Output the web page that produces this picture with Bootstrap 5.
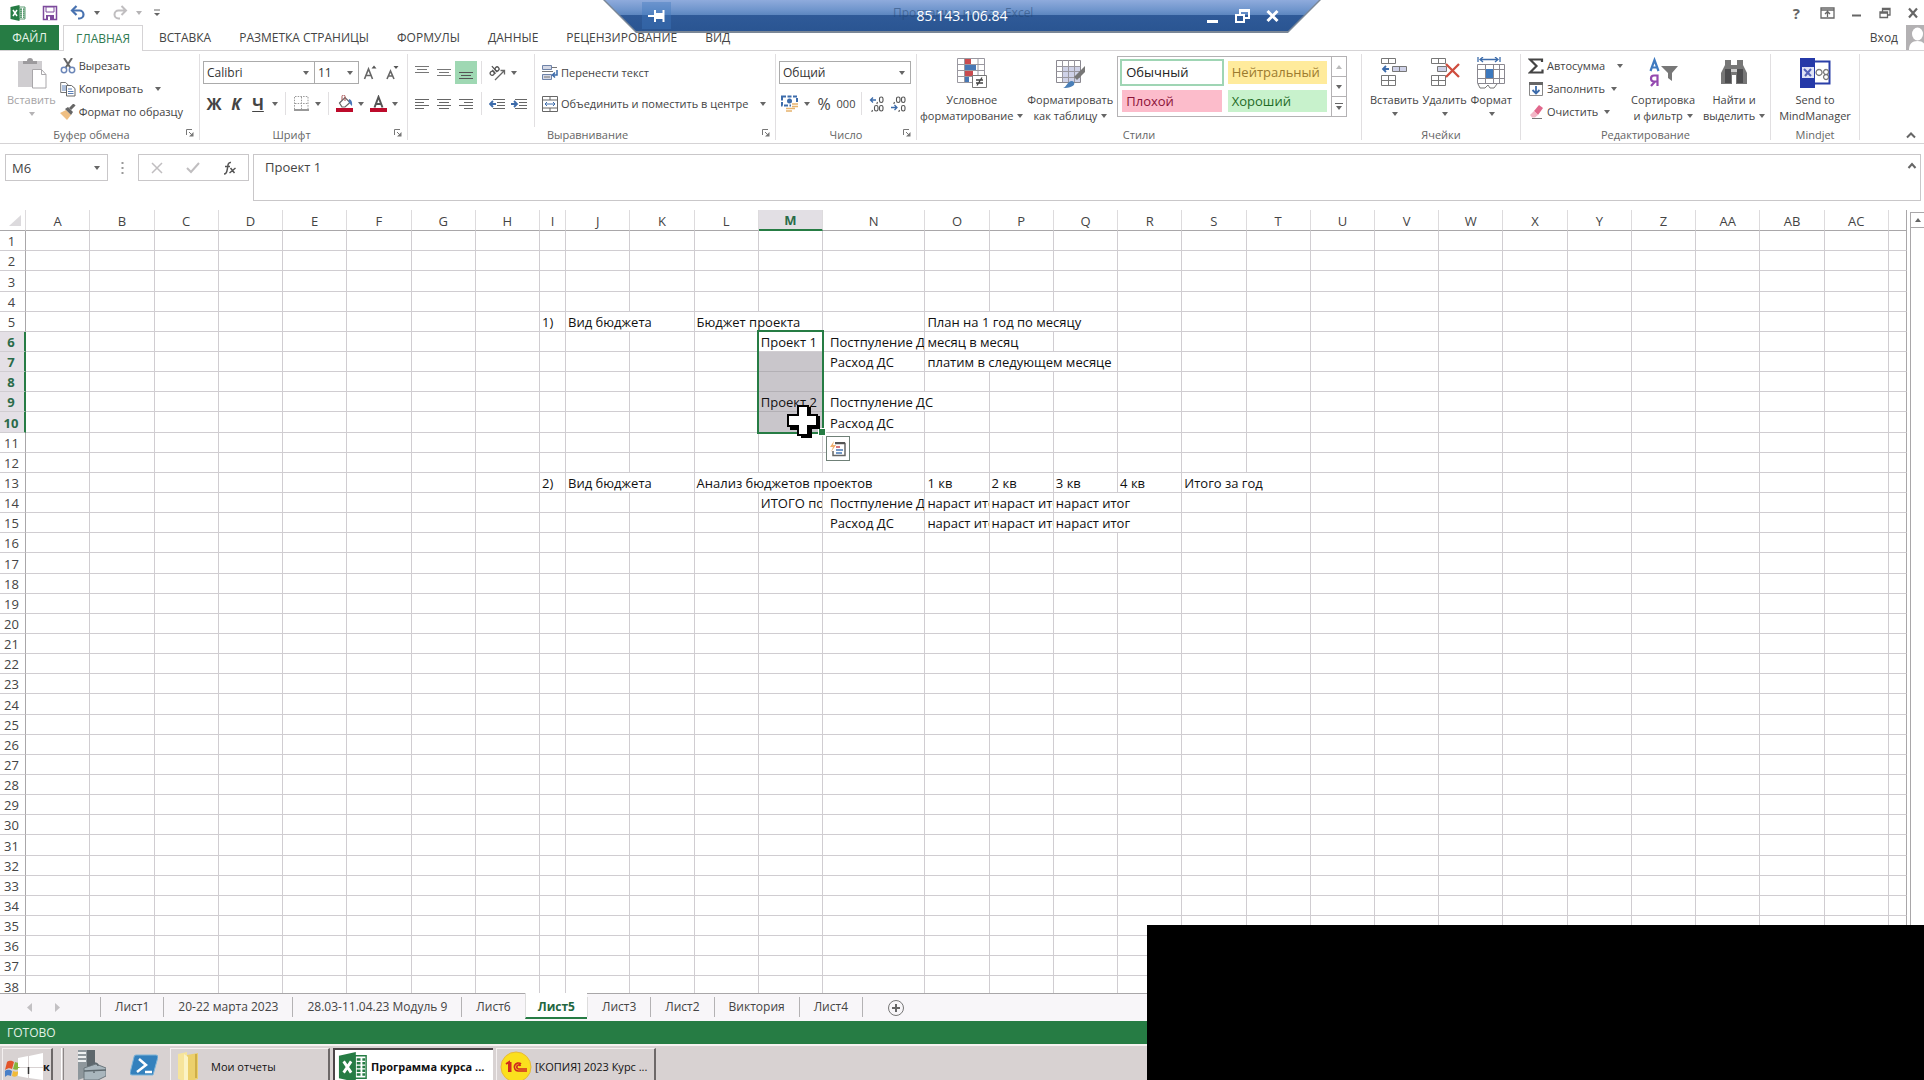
<!DOCTYPE html>
<html lang="ru">
<head>
<meta charset="utf-8">
<meta name="viewport" content="width=device-width, initial-scale=1">
<title>Программа курса - Excel</title>
<link href="https://cdn.jsdelivr.net/npm/bootstrap@5.3.0/dist/css/bootstrap.min.css" rel="stylesheet">
<style>
:root { --xl-green: #267c44; --xl-line: #d0cdd1; --xl-text: #444; }
body { font-family: "Open Sans", "Noto Sans", sans-serif; font-size: 12px; line-height: 16px; color: var(--xl-text); background: #fff; }
button { color: inherit; background: none; border: 0; padding: 0; }
svg { display: block; flex: none; }
a { color: inherit; text-decoration: none; }
.arrow { width: 0; height: 0; border: 3px solid transparent; border-top: 4px solid #666; border-bottom: 0; display: inline-block; flex: none; }
.faded { color: #a5a3a5; }
.faded .arrow { border-top-color: #b5b3b5; }

/* title row */
.title-row { height: 25px; padding: 0 5px 0 10px; }
.title-row .quick { gap: 12px; }
.title-row .wins { gap: 12px; }
.help-mark { font-size: 15px; font-weight: 700; color: #666; }

/* remote desktop bar */
.remote-edge { top: 0; width: 718px; height: 33px; background: #7b8796; clip-path: polygon(0 0, 100% 0, calc(100% - 33px) 100%, 33px 100%); z-index: 5; }
.remote-bar { height: 31px; margin: 0 2px; color: #fff; font-size: 14px; background: linear-gradient(#8fabdc 0, #6f95cc 10px, #5c86bf 15px, #2f5a98 15px, #2a5592 31px); clip-path: polygon(0 0, 100% 0, calc(100% - 31px) 100%, 31px 100%); padding: 0 40px 0 37px; }
.remote-bar .pin { width: 29px; height: 27px; background: #3f79bd66; }
.remote-ghost { left: 288px; top: 5px; font-size: 12px; color: #24457088; white-space: nowrap; }
.remote-name { width: 100px; }

/* ribbon tabs */
.tab-row { height: 26px; border-bottom: 1px solid #d5d3d5; }
.tab-row a { padding: 0 14px; height: 25px; display: flex; align-items: center; }
.tab-row a.file-tab { background: var(--xl-green); color: #e8f5ea; width: 59px; padding: 0; justify-content: center; margin-right: 4px; }
.tab-row a.now { border: 1px solid #d5d3d5; border-bottom: 0; height: 26px; color: #2f7a50; background: #fff; padding: 0; width: 80px; justify-content: center; margin-right: 2px; }

/* ribbon */
.ribbon { height: 93px; border-bottom: 1px solid #d5d3d5; font-size: 11px; }
.group { border-right: 1px solid #e1dfe1; margin: 3px 0; position: relative; flex: none; }
.group-body { height: 73px; padding: 0 3px; }
.group-name { height: 16px; text-align: center; color: #666; }
.group-name .launch { position: absolute; right: 5px; bottom: 3px; }
.w-clip { width: 200px; } .w-font { width: 208px; } .w-align { width: 368px; } .w-num { width: 141px; }
.w-style { width: 445px; } .w-cells { width: 159px; } .w-edit { width: 250px; } .w-mind { width: 89px; }
.small-btn { height: 23px; display: flex; align-items: center; gap: 3px; white-space: nowrap; }
.small-btn .arrow { margin-left: 3px; }
.small-btn .arrow.far { margin-left: 9px; }
.two-rows { padding-top: 7px; display: flex; flex-direction: column; gap: 8px; }
.two-rows > div { height: 23px; }
.tool { width: 22px; height: 23px; display: flex; align-items: center; justify-content: center; }
.tool.drop { width: 12px; }
.tool.on { background: #9fd8b3; }
.bar { width: 1px; background: #e1dfe1; margin: 0 4px; }
.big-btn { display: flex; flex-direction: column; align-items: center; padding-top: 3px; text-align: center; white-space: nowrap; }
.big-btn svg { margin-bottom: 3px; }
.big-btn .arrow { margin-left: 1px; vertical-align: 2px; }
.pick { appearance: none; border: 1px solid #ababab; border-radius: 0; color: #333; padding: 0 14px 0 3px; height: 23px; font-size: 12px; background: #fff url("data:image/svg+xml,%3Csvg xmlns='http://www.w3.org/2000/svg' width='6' height='4'%3E%3Cpath d='M0 0h6L3 4z' fill='%23666'/%3E%3C/svg%3E") no-repeat right 5px center; }
.pick-face { width: 112px; } .pick-size { width: 45px; margin-left: -1px; } .pick-num { width: 132px; }
.gallery { width: 230px; height: 61px; border: 1px solid #b4b2b4; margin-top: 2px; font-size: 13px; flex: none; }
.gallery-cells { flex: 1; display: grid; grid-template-columns: 1fr 1fr; gap: 6px; padding: 4px; }
.gallery-cells button { text-align: left; padding-left: 4px; }
.st-plain { color: #222; outline: 2px solid #9fd5b4; }
.st-neutral { background: #ffeb9c; color: #9c7a2e; }
.st-bad { background: #fcbccb; color: #8c1238; }
.st-good { background: #c8f2cc; color: #1f6b26; }
.gallery-nav { width: 15px; border-left: 1px solid #b4b2b4; }
.gallery-nav button { flex: 1; display: flex; align-items: center; justify-content: center; }
.gallery-nav button + button { border-top: 1px solid #b4b2b4; }

/* formula bar */
.formula-row { height: 66px; padding: 10px 3px 0 5px; font-size: 13px; }
.name-box { width: 103px; height: 27px; padding-left: 6px; border-color: #c9c7c9; font-size: 13px; color: var(--xl-text); background-position: right 7px center; }
.fx-box { width: 111px; height: 27px; border: 1px solid #c9c7c9; }
.formula-input { height: 47px; border: 1px solid #c9c7c9; resize: none; padding: 3px 11px; color: var(--xl-text); flex: 1; line-height: 18px; }

/* sheet */
.sheet-area { flex: 1; min-height: 0; overflow: hidden; }
.sheet-wrap { flex: 1; min-width: 0; }
.sheet { table-layout: fixed; width: 100%; border-collapse: separate; border-spacing: 0; color: #111; font-size: 13px; line-height: 18px; }
.sheet td, .sheet th { height: 20px; padding: 1px 0 0 2px; border-right: 1px solid var(--xl-line); border-bottom: 1px solid var(--xl-line); white-space: nowrap; overflow: hidden; font-weight: 400; }
.sheet tbody tr:nth-child(7n+3) > * { height: 21px; }
.sheet th { text-align: center; padding: 1px 0 0; color: var(--xl-text); }
.sheet tbody th { padding-right: 2px; border-right-color: #a9a7a9; }
.sheet thead th { border-bottom-color: #a9a7a9; height: 21px; line-height: 16px; border-right-color: #dddbdd; }
.sheet tbody th.picked { background: #e4e0e6; color: #2a6b49; font-weight: 700; border-right: 2px solid var(--xl-green); }
.sheet thead th.picked { background: #e2dfe4; color: #2a6b49; font-weight: 700; border-bottom: 2px solid var(--xl-green); }
.sheet td.shade { background: #c9c6cb; border-bottom-color: #b3b0b5; }
.sheet td.in { padding-left: 7px; }
.sheet td.anchor { position: relative; overflow: visible; z-index: 2; }
.sheet tr > :last-child { border-right-color: #a9a7a9; }
.marquee { position: absolute; left: -2px; top: -2px; width: calc(100% + 4px); height: 104px; border: 2px solid var(--xl-green); }
.marquee .handle { position: absolute; right: -3px; bottom: -3px; width: 6px; height: 6px; background: var(--xl-green); outline: 1px solid #fff; }
.quick-tool { position: absolute; left: 67px; top: 104px; width: 24px; height: 25px; border: 1px solid #6f8077; background: #fff; display: flex; align-items: center; justify-content: center; }
.cross { position: absolute; left: 27px; top: 72px; }
.scroller { width: 17px; flex: none; padding: 2px 0 0 3px; }
.scroller > div { border: 1px solid #a9a7a9; border-right: 0; flex: 1; }
.scroller button { height: 15px; width: 100%; border-bottom: 1px solid #a9a7a9; display: flex; align-items: center; justify-content: center; }

/* sheet tabs, status, taskbar */
.sheet-tabs { height: 28px; border-top: 1px solid #a9a7a9; background: #f8f6f9; padding-left: 100px; position: relative; }
.sheet-tabs .turn { position: absolute; left: 27px; top: 9px; gap: 21px; }
.sheet-tabs a { height: 20px; margin-top: 3px; line-height: 20px; padding: 0 14px; border-left: 1px solid #b4b2b4; }
.sheet-tabs a.now { margin-top: -1px; height: 26px; line-height: 27px; background: #fff; color: #23663f; font-weight: 700; border-left-color: #ddd; border-bottom: 2px solid var(--xl-green); padding: 0 12px; }
.sheet-tabs a.now + a { border-left-color: #ddd; }
.status { height: 23px; background: var(--xl-green); color: #e3f1e6; padding-left: 7px; line-height: 23px; }
.tasks { height: 36px; border-top: 2px solid #f6f2f0; background: #d8d2d2; padding: 2px 0 0 2px; font-size: 11px; color: #111; overflow: hidden; }
.task { width: 160px; height: 38px; margin-right: 3px; display: flex; align-items: center; gap: 3px; border: 1px solid #f4f0f0; border-right: 2px solid #6d6868; padding: 0 3px; white-space: nowrap; }
.task.live { background: #fff; border: 2px solid #4c4549; border-right: 0; font-weight: 700; }
.task.begin { width: 51px; padding: 0 2px; gap: 0; font-weight: 700; margin-right: 8px; }
.task-split { width: 3px; height: 36px; border-left: 1px solid #fff; border-right: 1px solid #8b8686; }
.privacy { right: 0; bottom: 0; width: 777px; height: 155px; background: #000; z-index: 6; }
</style>
<script src="https://cdn.jsdelivr.net/npm/bootstrap@5.3.0/dist/js/bootstrap.bundle.min.js"></script>
</head>
<body class="d-flex flex-column vh-100 overflow-hidden position-relative">

<svg width="0" height="0" class="position-absolute">
  <defs>
    <symbol id="launch" viewBox="0 0 8 8"><path d="M.5 6V.5H6M3 3l3 3" fill="none" stroke="#777"/><path d="M7.500 3v4.500H3z" fill="#777"/></symbol>
    <symbol id="excel" viewBox="0 0 32 32"><path d="M18 4h12v24H18z" fill="#fff" stroke="#267c44" stroke-width="1.500"/><path d="M20 8h4M26 8h3M20 12h4M26 12h3M20 16h4M26 16h3M20 20h4M26 20h3M20 24h4M26 24h3" stroke="#267c44" stroke-width="2.500"/><path d="M1 4l18-4v32L1 28z" fill="#267c44"/><path d="M6 10l8 12M14 10L6 22" stroke="#fff" stroke-width="3"/></symbol>
  </defs>
</svg>

<header>
  <div class="title-row d-flex justify-content-between align-items-center">
    <div class="quick d-flex align-items-center">
      <svg width="16" height="16"><use href="#excel"/></svg>
      <button aria-label="Сохранить" class="ms-1"><svg width="16" height="16" viewBox="0 0 16 16"><path d="M1.500 1.500h13v13h-13z" fill="#fff" stroke="#7d4a9c" stroke-width="1.500"/><path d="M4 2h8v5H4z" fill="#fff" stroke="#7d4a9c"/><path d="M4 10h8v5H4z" fill="#7d4a9c"/><path d="M6 11.500h2V15H6z" fill="#fff"/></svg></button>
      <button aria-label="Отменить" class="d-flex align-items-center gap-2"><svg width="16" height="16" viewBox="0 0 16 16"><path d="M3 5.500h6.500a3.800 3.800 0 0 1 0 8H8" fill="none" stroke="#4872b0" stroke-width="2.200"/><path d="M6.500 1L2 5.500 6.500 10" fill="none" stroke="#4872b0" stroke-width="2.200"/></svg><span class="arrow"></span></button>
      <button aria-label="Вернуть" class="d-flex align-items-center gap-2 faded"><svg width="16" height="16" viewBox="0 0 16 16"><path d="M13 5.500H6.500a3.800 3.800 0 0 0 0 8H8M9.500 1L14 5.500 9.500 10" fill="none" stroke="#c0bec0" stroke-width="2"/></svg><span class="arrow"></span></button>
      <button aria-label="Настройка панели"><svg width="6" height="8" viewBox="0 0 6 8"><path d="M0 1h6" stroke="#666"/><path d="M0 4h6L3 7z" fill="#666"/></svg></button>
    </div>
    <div class="wins d-flex align-items-center">
      <button aria-label="Справка" class="help-mark px-2">?</button>
      <button aria-label="Лента"><svg width="15" height="12" viewBox="0 0 15 12"><path d="M1 1h13v10H1zM1 3h13M7.500 10V5M5 7l2.500-2.500L10 7" fill="none" stroke="#666" stroke-width="1.300"/></svg></button>
      <button aria-label="Свернуть" class="ms-1"><svg width="12" height="12"><path d="M1 8.500h9" stroke="#666" stroke-width="2"/></svg></button>
      <button aria-label="Окно" class="ms-1"><svg width="12" height="12" viewBox="0 0 12 12"><path d="M1 5h7.500v5.500H1zM1 6h7M3.500 4.500V1.500h7.500V8H9M3.500 2.500H11" fill="none" stroke="#666" stroke-width="1.300"/></svg></button>
      <button aria-label="Закрыть" class="ms-1"><svg width="12" height="12"><path d="M2 1.500l8 9M10 1.500l-8 9" stroke="#666" stroke-width="2.200"/></svg></button>
    </div>
  </div>

  <nav class="tab-row d-flex">
    <a href="#" class="file-tab">ФАЙЛ</a>
    <a href="#" class="now">ГЛАВНАЯ</a>
    <a href="#">ВСТАВКА</a>
    <a href="#">РАЗМЕТКА СТРАНИЦЫ</a>
    <a href="#">ФОРМУЛЫ</a>
    <a href="#">ДАННЫЕ</a>
    <a href="#">РЕЦЕНЗИРОВАНИЕ</a>
    <a href="#">ВИД</a>
    <a href="#" class="ms-auto p-0 pe-2">Вход</a>
    <svg width="18" height="25" viewBox="0 0 18 25"><path d="M0 0h18v25H0z" fill="#b3b1b3"/><ellipse cx="11.500" cy="9" rx="5.500" ry="6.500" fill="#fff"/><path d="M3 25c0-6 3-9 8.500-9S20 19 20 25z" fill="#fff"/></svg>
  </nav>
</header>

<section class="ribbon d-flex position-relative">
  <div class="group w-clip">
    <div class="group-body d-flex">
      <button class="big-btn faded px-1"><svg width="32" height="32" viewBox="0 0 32 32"><path d="M3 4h24v26H3z" fill="#cfcdd0"/><path d="M8 7V4h4a3 3 0 0 1 6 0h4v3z" fill="#9c9a9d"/><path d="M17.500 12.500h9l4.500 5v13.500H17.500z" fill="#fff" stroke="#a9a7aa"/><path d="M26.500 12.500v5H31" fill="none" stroke="#a9a7aa"/></svg>Вставить<span class="arrow mt-1"></span></button>
      <div>
        <button class="small-btn"><svg width="16" height="16" viewBox="0 0 16 16"><path d="M4 0l6.500 10M12 0L5.500 10" stroke="#666" stroke-width="2"/><circle cx="4" cy="12" r="2.700" fill="none" stroke="#6d87b8" stroke-width="1.500"/><circle cx="12" cy="12" r="2.700" fill="none" stroke="#6d87b8" stroke-width="1.500"/></svg>Вырезать</button>
        <button class="small-btn"><svg width="16" height="16" viewBox="0 0 16 16"><path d="M.7 1.500h5l3 3v7h-8z" fill="#fff" stroke="#777"/><path d="M2 5h4M2 7h4M2 9h4" stroke="#5b7fb5"/><path d="M6.500 4.500h5l3.500 3v7.500H6.500z" fill="#fff" stroke="#666"/><path d="M8 8h4M8 10.500h5.500M8 12.500h5.500" stroke="#5b7fb5"/></svg>Копировать<span class="arrow far"></span></button>
        <button class="small-btn"><svg width="16" height="16" viewBox="0 0 16 16"><path d="M0 9l6-3 5 5-4 5z" fill="#efbf83"/><path d="M5 5l3-2 5 5-2 3z" fill="#666"/><path d="M10 5l4.500-4.500" stroke="#666" stroke-width="3"/></svg>Формат по образцу</button>
      </div>
    </div>
    <div class="group-name pe-3">Буфер обмена<svg class="launch" width="8" height="8"><use href="#launch"/></svg></div>
  </div>

  <div class="group w-font">
    <div class="group-body two-rows">
      <div class="d-flex align-items-center">
        <select class="pick pick-face" aria-label="Шрифт"><option>Calibri</option></select>
        <select class="pick pick-size" aria-label="Размер"><option>11</option></select>
        <button class="tool" aria-label="Крупнее"><svg width="14" height="16" viewBox="0 0 14 16"><path d="M1.500 14L5.500 4l4 10M3 10.500h5" fill="none" stroke="#666" stroke-width="1.600"/><path d="M8.500 3.500h5L11 .5z" fill="#555"/></svg></button>
        <button class="tool" aria-label="Мельче"><svg width="14" height="16" viewBox="0 0 14 16"><path d="M2 14l3.500-8L9 14M3.500 11h4" fill="none" stroke="#666" stroke-width="1.600"/><path d="M8.500 1h5L11 4z" fill="#555"/></svg></button>
      </div>
      <div class="d-flex">
        <button class="tool fw-bold fs-6">Ж</button><button class="tool fw-bold fst-italic fs-6">К</button><button class="tool fw-bold fs-6 text-decoration-underline">Ч</button><button class="tool drop" aria-label="Подчеркивание"><span class="arrow"></span></button>
        <span class="bar"></span>
        <button class="tool" aria-label="Границы"><svg width="15" height="15" viewBox="0 0 15 15"><path d="M1 .5h13M1 7.500h13M.5 1v12M7.500 1v12M14 1v12" fill="none" stroke="#999" stroke-dasharray="1.500 1.200"/><path d="M0 14h15" stroke="#777" stroke-width="1.500"/></svg></button><button class="tool drop" aria-label="Вид границ"><span class="arrow"></span></button>
        <span class="bar"></span>
        <button class="tool" aria-label="Заливка"><svg width="17" height="17" viewBox="0 0 17 17"><path d="M3.500 8L9 2.500l5 5-5 4.500H6z" fill="#fff" stroke="#666" stroke-width="1.200"/><path d="M6 5V1.500A1.500 1.500 0 0 1 9 1.500V6" fill="none" stroke="#a55" stroke-width="1"/><path d="M13 4c3 1 3.500 4 3 7-2-1-1.500-3-3.500-4z" fill="#4a76b8"/><path d="M0 13h17v4H0z" fill="#bd0b2b"/></svg></button><button class="tool drop" aria-label="Цвет заливки"><span class="arrow"></span></button>
        <button class="tool" aria-label="Цвет текста"><svg width="17" height="17" viewBox="0 0 17 17"><path d="M4.500 12.500l4-10.500 4 10.500M6 9h5" fill="none" stroke="#555" stroke-width="2"/><path d="M0 13h17v4H0z" fill="#bd0b2b"/></svg></button><button class="tool drop" aria-label="Выбор цвета"><span class="arrow"></span></button>
      </div>
    </div>
    <div class="group-name pe-4">Шрифт<svg class="launch" width="8" height="8"><use href="#launch"/></svg></div>
  </div>

  <div class="group w-align">
    <div class="d-flex">
      <div class="group-body two-rows pe-0">
        <div class="d-flex">
          <button class="tool" aria-label="По верху"><svg width="14" height="15"><path d="M0 1.500h14M2 4.500h10M0 7.500h14" stroke="#777"/></svg></button><button class="tool" aria-label="По середине"><svg width="14" height="15"><path d="M0 4.500h14M2 7.500h10M0 10.500h14" stroke="#777"/></svg></button><button class="tool on" aria-label="По низу"><svg width="14" height="15"><path d="M0 7.500h14M2 10.500h10M0 13.500h14" stroke="#555"/></svg></button>
          <span class="bar"></span>
          <button class="tool" aria-label="Ориентация"><svg width="17" height="16" viewBox="0 0 17 16"><g fill="none" stroke="#555" stroke-width="1.300" transform="rotate(-42 5 8)"><circle cx="3.500" cy="7" r="2"/><path d="M5.800 4.500v5M8 1.500v8"/><circle cx="10" cy="7" r="2"/></g><path d="M6 15L15 6M11.500 5.500H15.500V9.500" fill="none" stroke="#666" stroke-width="1.300"/></svg></button><button class="tool drop" aria-label="Поворот"><span class="arrow"></span></button>
        </div>
        <div class="d-flex">
          <button class="tool" aria-label="По левому краю"><svg width="14" height="12"><path d="M0 1.500h14M0 4.500h9M0 7.500h14M0 10.500h9" stroke="#666"/></svg></button><button class="tool" aria-label="По центру"><svg width="14" height="12"><path d="M0 1.500h14M2 4.500h10M0 7.500h14M2 10.500h10" stroke="#666"/></svg></button><button class="tool" aria-label="По правому краю"><svg width="14" height="12"><path d="M0 1.500h14M5 4.500h9M0 7.500h14M5 10.500h9" stroke="#666"/></svg></button>
          <span class="bar"></span>
          <button class="tool" aria-label="Уменьшить отступ"><svg width="16" height="12"><path d="M4 1.500h12M8 4.500h8M8 7.500h8M4 10.500h12" stroke="#666"/><path d="M7 6H1.500M4 3L1 6l3 3" fill="none" stroke="#3d6cab" stroke-width="1.800"/></svg></button><button class="tool" aria-label="Увеличить отступ"><svg width="16" height="12"><path d="M4 1.500h12M8 4.500h8M8 7.500h8M4 10.500h12" stroke="#666"/><path d="M0 6h5.500M3 3l3 3-3 3" fill="none" stroke="#3d6cab" stroke-width="1.800"/></svg></button>
        </div>
      </div>
      <span class="bar"></span>
      <div class="group-body two-rows">
        <div><button class="small-btn"><svg width="16" height="16" viewBox="0 0 16 16"><path d="M.5.500h9v4h-9zM.5 9.500h9v5h-9z" fill="#d5d9e6" stroke="#6f83a8"/><path d="M0 6.500h11M10 2.500h5M2 12h6" stroke="#777"/><path d="M15 5v5H11M13 7.500L10.500 10l2.500 2.500" fill="none" stroke="#3d6cab" stroke-width="1.500"/></svg>Перенести текст</button></div>
        <div><button class="small-btn"><svg width="16" height="16" viewBox="0 0 16 16"><path d="M.5.500h15v15H.5zM.5 4h15M.5 12h15M8 .5V4M8 12v3.500" fill="none" stroke="#666"/><path d="M3 8h10M5 6L3 8l2 2M11 6l2 2-2 2" fill="none" stroke="#3d6cab"/></svg>Объединить и поместить в центре<span class="arrow far"></span></button></div>
      </div>
    </div>
    <div class="group-name pe-2">Выравнивание<svg class="launch" width="8" height="8"><use href="#launch"/></svg></div>
  </div>

  <div class="group w-num">
    <div class="group-body two-rows">
      <div><select class="pick pick-num" aria-label="Формат числа"><option>Общий</option></select></div>
      <div class="d-flex">
        <button class="tool" aria-label="Денежный формат"><svg width="18" height="17" viewBox="0 0 18 17"><path d="M1 1.500h15v9H1z" fill="#fff" stroke="#3d6cab" stroke-width="2" stroke-dasharray="4 1.500"/><circle cx="8.500" cy="6" r="2.500" fill="#3d6cab"/><path d="M10 8h8v9H4v-5h6z" fill="#fff"/><path d="M11 9h6M11 11.500h6M5 13.500h9M5 16h6" stroke="#e6b36e" stroke-width="1.600"/></svg></button><button class="tool drop" aria-label="Валюта"><span class="arrow"></span></button>
        <button class="tool fs-6">%</button><button class="tool">000</button>
        <span class="bar"></span>
        <button class="tool" aria-label="Увеличить разрядность"><svg width="16" height="16" viewBox="0 0 16 16"><g fill="none" stroke="#555" stroke-width="1.100"><rect x="10.500" y="1" width="3.500" height="5.500" rx="1.700"/><rect x="5.500" y="9.500" width="3.500" height="5.500" rx="1.700"/><rect x="10.500" y="9.500" width="3.500" height="5.500" rx="1.700"/><path d="M8.500 6l-.7 2M3.500 14l-.7 2"/></g><path d="M7 4H1.500M4 1.500L1.500 4 4 6.500" fill="none" stroke="#3d6cab" stroke-width="1.300"/></svg></button>
        <button class="tool" aria-label="Уменьшить разрядность"><svg width="16" height="16" viewBox="0 0 16 16"><g fill="none" stroke="#555" stroke-width="1.100"><rect x="5.500" y="1" width="3.500" height="5.500" rx="1.700"/><rect x="10.500" y="1" width="3.500" height="5.500" rx="1.700"/><rect x="10.500" y="9.500" width="3.500" height="5.500" rx="1.700"/><path d="M3.500 6l-.7 2M8.500 14l-.7 2"/></g><path d="M0 11.500h6M3.500 9L6 11.500 3.500 14" fill="none" stroke="#3d6cab" stroke-width="1.300"/></svg></button>
      </div>
    </div>
    <div class="group-name">Число<svg class="launch" width="8" height="8"><use href="#launch"/></svg></div>
  </div>

  <div class="group w-style">
    <div class="group-body d-flex">
      <button class="big-btn"><svg width="32" height="32" viewBox="0 0 32 32"><path d="M1.500 1.500h27v24h-27zM1.500 7.500h27M1.500 13.500h27M1.500 19.500h27M8.500 1v25M22 1v25" fill="#fff" stroke="#9a98a0"/><path d="M9 2h6v5H9zM9 14h8v5H9z" fill="#c94b4f"/><path d="M9 8h11v5H9zM9 20h4v5H9z" fill="#4778b5"/><path d="M16.500 18.500h14v12h-14z" fill="#fff" stroke="#777"/><path d="M20 23h7M20 26h7M26 20.500l-5 8" stroke="#444" stroke-width="1.300"/></svg><span>Условное<br>форматирование <span class="arrow"></span></span></button>
      <button class="big-btn px-1"><svg width="32" height="32" viewBox="0 0 32 32"><path d="M2.500 3.500h24v22h-24z" fill="#fff" stroke="#8a8890"/><path d="M9 9h17v16H9z" fill="#cfd2e8"/><path d="M2.500 9.500h24M2.500 14.500h24M2.500 20.500h24M8.500 3v22M14.500 3v22M20.500 3v22" stroke="#9a98a0"/><path d="M31 9v6l-8 8-3-3z" fill="#777"/><path d="M9 31c4-1 4-7 9-7 4 1 4 7-9 7z" fill="#4a7fb8"/></svg><span>Форматировать<br>как таблицу <span class="arrow"></span></span></button>
      <div class="gallery d-flex">
        <div class="gallery-cells">
          <button class="st-plain">Обычный</button><button class="st-neutral">Нейтральный</button>
          <button class="st-bad">Плохой</button><button class="st-good">Хороший</button>
        </div>
        <div class="gallery-nav d-flex flex-column">
          <button aria-label="Вверх"><svg width="6" height="4"><path d="M0 4h6L3 0z" fill="#bbb"/></svg></button>
          <button aria-label="Вниз"><span class="arrow"></span></button>
          <button aria-label="Все стили"><svg width="8" height="7"><path d="M0 .5h8" stroke="#666"/><path d="M1 3h6L4 7z" fill="#666"/></svg></button>
        </div>
      </div>
    </div>
    <div class="group-name">Стили</div>
  </div>

  <div class="group w-cells">
    <div class="group-body d-flex justify-content-between px-2">
      <button class="big-btn"><svg width="32" height="32" viewBox="0 0 32 32"><path d="M3.500 1.500h14v5h-14zM10.500 1.500v5M3.500 18.500h14v10h-14zM3.500 23.500h14M10.500 18.500v10" fill="#fff" stroke="#777"/><path d="M14.500 9.500h14v5h-14zM21.500 9.500v5" fill="#cfd2e8" stroke="#777"/><path d="M11 12H5M8 9l-3 3 3 3" fill="none" stroke="#3d6cab" stroke-width="1.800"/></svg>Вставить<span class="arrow mt-1"></span></button>
      <button class="big-btn"><svg width="32" height="32" viewBox="0 0 32 32"><path d="M2.500 1.500h14v5h-14zM9.500 1.500v5M2.500 18.500h14v10h-14zM2.500 23.500h14M9.500 18.500v10" fill="#fff" stroke="#777"/><path d="M8.500 9.500h9v5h-9z" fill="#cfd2e8" stroke="#777"/><path d="M17 7l13 13M30 7L17 20" stroke="#cf4d3e" stroke-width="2.300"/></svg>Удалить<span class="arrow mt-1"></span></button>
      <button class="big-btn"><svg width="32" height="32" viewBox="0 0 32 32"><path d="M3 0v5M25 0v5M5 2.500h18M8 0L5 2.500 8 5M20 0l3 2.500L20 5" fill="none" stroke="#3d6cab" stroke-width="1.300"/><path d="M2.500 7.500h27v19h-27zM2.500 12.500h27M2.500 21.500h27M10.500 7v20M18.500 7v20M24.500 7v20" fill="#fff" stroke="#8a8890"/><path d="M11 12h7v9h-7z" fill="#3c78bd"/><path d="M3 27l2 4h5l3-3 2 3h4l3-4" fill="none" stroke="#777"/></svg>Формат<span class="arrow mt-1"></span></button>
    </div>
    <div class="group-name">Ячейки</div>
  </div>

  <div class="group w-edit">
    <div class="group-body d-flex">
      <div class="ps-1 me-2">
        <button class="small-btn"><svg width="16" height="16" viewBox="0 0 16 16"><path d="M14 4V1.500H2L8.500 8 2 14.500h12.500V11.500" fill="none" stroke="#444" stroke-width="2.200"/></svg>Автосумма<span class="arrow far"></span></button>
        <button class="small-btn"><svg width="16" height="16" viewBox="0 0 16 16"><path d="M1.500 1.500h13v13h-13z" fill="#fff" stroke="#888"/><path d="M1 1h14v3H1z" fill="#666"/><path d="M8 5v7.500M4.500 9L8 12.500 11.500 9" fill="none" stroke="#3d6cab" stroke-width="1.800"/></svg>Заполнить<span class="arrow"></span></button>
        <button class="small-btn"><svg width="16" height="16" viewBox="0 0 16 16"><path d="M6 7l5-6 4 3-5 7z" fill="#e1688c"/><path d="M6 7l4 4-3 2.500H4L2 11z" fill="#f2b6c6"/><path d="M4 14.500h10" stroke="#777"/></svg>Очистить<span class="arrow"></span></button>
      </div>
      <button class="big-btn"><svg width="32" height="32" viewBox="0 0 32 32"><path d="M3.500 14l4-11 4 11M5 10.500h5.500" fill="none" stroke="#3f7ac0" stroke-width="2.200"/><path d="M10.500 29V18.500H7a3 3 0 0 0 0 6h3.500M8 24.500L4 29" fill="none" stroke="#9449b0" stroke-width="2.200"/><path d="M14 9h17l-6 7v8l-4-3v-5z" fill="#777"/></svg><span>Сортировка<br>и фильтр <span class="arrow"></span></span></button>
      <button class="big-btn ms-2"><svg width="32" height="32" viewBox="0 0 32 32"><path d="M7 3h6v5h6V3h6v5l4 8v11H18v-9h-4v9H3V16l4-8z" fill="#777"/><path d="M7 12h6v14H7zM19 12h6v14h-6z" fill="#4d4d4f"/><path d="M13 12h6v3h-6z" fill="#ccc"/></svg><span>Найти и<br>выделить <span class="arrow"></span></span></button>
    </div>
    <div class="group-name">Редактирование</div>
  </div>

  <div class="group w-mind">
    <div class="group-body d-flex justify-content-center">
      <button class="big-btn"><svg width="32" height="32" viewBox="0 0 32 32"><path d="M15 4.500h15.500v22H15z" fill="#fff" stroke="#2a3fa8" stroke-width="2"/><path d="M1 1h15v30H1z" fill="#2539a8"/><path d="M3 10h12v11H3z" fill="#dfe3f5"/><path d="M5 12l7 7M12 12l-6 7" stroke="#5462b8" stroke-width="2"/><path d="M20 12.500a3 3 0 1 0 .1 0M27 12.500a2.500 2.500 0 1 0 .1 0M27 17.500a2.500 2.500 0 1 0 .1 0" fill="none" stroke="#777" stroke-width="1.300"/></svg><span>Send to<br>MindManager</span></button>
    </div>
    <div class="group-name">Mindjet</div>
  </div>
  <button class="ms-auto align-self-end pe-2 pb-1" aria-label="Свернуть ленту"><svg width="10" height="8"><path d="M1 6.500l4-4 4 4" fill="none" stroke="#666" stroke-width="2"/></svg></button>
</section>

<section class="formula-row d-flex align-items-start">
  <select class="pick name-box" aria-label="Имя ячейки"><option>M6</option></select>
  <svg width="30" height="27"><path d="M14.500 8v2M14.500 13v2M14.500 18v2" stroke="#999" stroke-width="2"/></svg>
  <div class="fx-box d-flex justify-content-around align-items-center me-1">
    <button aria-label="Отмена"><svg width="12" height="12"><path d="M1 1l10 10M11 1L1 11" stroke="#c0bec0" stroke-width="1.500"/></svg></button>
    <button aria-label="Ввод"><svg width="14" height="12"><path d="M1 6l4 4 8-9" fill="none" stroke="#c0bec0" stroke-width="2"/></svg></button>
    <button aria-label="Функция"><svg width="14" height="14" viewBox="0 0 14 14"><path d="M1 13c3 0 3-3 3.500-6S5 1 8 1.500M2 5.500h5M7.500 7l4 5M12.500 7l-6 5" fill="none" stroke="#555" stroke-width="1.500"/></svg></button>
  </div>
  <div class="d-flex flex-grow-1 position-relative">
    <textarea class="formula-input" aria-label="Строка формул">Проект 1</textarea>
    <svg class="position-absolute end-0 mt-2 me-1" width="10" height="8"><path d="M1.500 6l3.500-4 3.500 4" fill="none" stroke="#666" stroke-width="2"/></svg>
  </div>
</section>

<main class="sheet-area d-flex">
  <div class="sheet-wrap"><table class="sheet" id="sheet"></table></div>
  <div class="scroller d-flex"><div><button aria-label="Прокрутить вверх"><svg width="6" height="4"><path d="M0 4h6L3 0z" fill="#666"/></svg></button></div></div>
</main>

<nav class="sheet-tabs d-flex">
  <div class="turn d-flex"><svg width="6" height="9"><path d="M5 0v9L0 4.500z" fill="#c3c1c4"/></svg><svg width="6" height="9"><path d="M1 0v9l5-4.500z" fill="#c3c1c4"/></svg></div>
  <a href="#">Лист1</a><a href="#">20-22 марта 2023</a><a href="#">28.03-11.04.23 Модуль 9</a><a href="#">Лист6</a><a href="#" class="now">Лист5</a><a href="#">Лист3</a><a href="#">Лист2</a><a href="#">Виктория</a><a href="#">Лист4</a><a href="#" class="ps-0 pe-4" aria-label="Конец списка"></a>
  <button aria-label="Новый лист"><svg width="18" height="18"><circle cx="9" cy="9" r="7.500" fill="none" stroke="#777"/><path d="M9 5v8M5 9h8" stroke="#666" stroke-width="2"/></svg></button>
</nav>
<div class="status">ГОТОВО</div>
<footer class="tasks d-flex align-items-start">
  <button class="task begin"><svg width="38" height="30" viewBox="0 0 38 30"><path d="M2 10c3-2 5-1 7 0l-2 7c-2-1-4-1-7 1z" fill="#e2552b"/><path d="M10 10c2 1 4 1 6 0l-2 7c-2 1-4 1-6 0z" fill="#85b53a"/><path d="M0 19c3-2 5-1 7 0l-1 5c-3-1-4-1-6 1z" fill="#4a80c8"/><path d="M8 19c2 1 4 1 6 0l-2 5c-2 1-3 1-5 0z" fill="#f1bb3a"/><path d="M13 6l10-2v11H13zM24 4l14-3v14H24zM13 16h10v10l-10-2zM24 16h14v12l-14-2z" fill="#fff"/><path d="M23.500 15v7" stroke="#333" stroke-width="1.500"/></svg><span>к</span></button>
  <span class="task-split"></span>
  <button class="ms-2 px-1" aria-label="Диспетчер серверов"><svg width="30" height="32" viewBox="0 0 30 32"><path d="M2 2h17v24l-17 6z" fill="#8e979c"/><path d="M11 2h8v24h-8z" fill="#5e676c"/><path d="M2 5h8M2 9h8M2 13h8" stroke="#eceff0" stroke-width="2"/><path d="M8 20l12-4 10 4v8l-8 4H8z" fill="#a9b6bd" stroke="#6c777d"/><path d="M14 18c0-4 8-4 8 0M8 23l22-1M18 22v3" fill="none" stroke="#5d686e" stroke-width="1.500"/></svg></button>
  <button class="ms-3 me-2 mt-1 px-1" aria-label="PowerShell"><svg width="28" height="28" viewBox="0 0 28 28"><path d="M6 3h20a2 2 0 0 1 2 2l-5 18H2a2 2 0 0 1-2-2L4 5a2 2 0 0 1 2-2z" fill="#3481bd" stroke="#7fb5d9"/><path d="M9 7l7 6-9 7M15 20h7" fill="none" stroke="#fff" stroke-width="2.500"/></svg></button>
  <button class="task"><svg width="34" height="32" viewBox="0 0 34 32"><path d="M4 3l9-2v30l-9-3z" fill="#f6e49a"/><path d="M13 4l11-2v26l-11 3z" fill="#ecd06c"/><path d="M10 3l4 3v25l-4-2z" fill="#fbf3c4"/><path d="M22 3v24" stroke="#cfae48" stroke-width="2"/></svg><span>Мои отчеты</span></button>
  <button class="task live"><svg width="30" height="32"><use href="#excel"/></svg><span>Программа курса ...</span></button>
  <button class="task"><svg width="32" height="32" viewBox="0 0 32 32"><circle cx="16" cy="16" r="15" fill="#fbe01e" stroke="#e8b93a"/><path d="M6 13l3-2v10M10.500 11v10" fill="none" stroke="#cf2a1e" stroke-width="2"/><path d="M21 13a4 4 0 1 0-3 7h9M20.500 15a2 2 0 1 0-1.500 3h8" fill="none" stroke="#cf2a1e" stroke-width="1.700"/></svg><span>[КОПИЯ] 2023 Курс ...</span></button>
</footer>

<div class="remote-edge position-absolute start-50 translate-middle-x">
  <div class="remote-bar d-flex align-items-center justify-content-between position-relative">
    <span class="remote-ghost position-absolute">Программа курса - Excel</span>
    <button class="pin d-flex align-items-center justify-content-center" aria-label="Закрепить"><svg width="17" height="14" viewBox="0 0 17 14"><path d="M0 7h7M7 1v12M15.500 1v12" stroke="#fff" stroke-width="2"/><path d="M7 4h9v6H7z" fill="#fff"/></svg></button>
    <div class="remote-name position-absolute start-50 translate-middle-x text-center">85.143.106.84</div>
    <div class="d-flex gap-3">
      <button aria-label="Свернуть сеанс"><svg width="13" height="16"><path d="M1 13.500h11" stroke="#fff" stroke-width="3"/></svg></button>
      <button aria-label="Окно сеанса"><svg width="15" height="16"><path d="M1 7h8v7H1zM5 6V2h9v8h-4M5 3h9" fill="none" stroke="#fff" stroke-width="2"/></svg></button>
      <button aria-label="Закрыть сеанс"><svg width="13" height="16"><path d="M1.500 3l10 10M11.500 3l-10 10" stroke="#fff" stroke-width="3"/></svg></button>
    </div>
  </div>
</div>
<div class="privacy position-absolute"></div>

<template id="selection">
  <span class="marquee"><span class="handle"></span></span>
  <button class="quick-tool" aria-label="Быстрый анализ"><svg width="18" height="18" viewBox="0 0 18 18"><path d="M6 3.500h10v12H4V11" fill="#fff" stroke="#666" stroke-width="1.500"/><path d="M6 3h10" stroke="#555" stroke-width="2"/><path d="M7 7h4" stroke="#c94b4f" stroke-width="1.500"/><path d="M7 10h7M7 13h6" stroke="#4778b5" stroke-width="1.500"/><path d="M5 1L1 7h3l-2 5 5-7H4z" fill="#f0ae6d"/></svg></button>
  <svg class="cross" width="36" height="35" viewBox="0 0 36 35"><path d="M14 3h11v9h9v13h-8v9H15v-8H4V14h10z" fill="#000"/><path d="M12 2h10v9h9v11h-9v9H12v-9H2V11h10z" fill="#fff" stroke="#000" stroke-width="2"/></svg>
</template>

<script>
const columns = [..."ABCDEFGHIJKLMNOPQRSTUVWXYZ", "AA", "AB", "AC", ""];
const widths = { I: 26, N: 102, "": 18 };
// row -> column -> [text, number of columns the text runs over]
const values = {
  5: { I: ["1)"], J: ["Вид бюджета", 2], L: ["Бюджет проекта", 2], O: ["План на 1 год по месяцу", 3] },
  6: { M: ["Проект 1"], N: ["Постпуление ДС"], O: ["месяц в месяц", 2] },
  7: { N: ["Расход ДС"], O: ["платим в следующем месяце", 3] },
  9: { M: ["Проект 2"], N: ["Постпуление ДС", 2] },
  10: { N: ["Расход ДС"] },
  13: { I: ["2)"], J: ["Вид бюджета", 2], L: ["Анализ бюджетов проектов", 3], O: ["1 кв"], P: ["2 кв"], Q: ["3 кв"], R: ["4 кв"], S: ["Итого за год", 2] },
  14: { M: ["ИТОГО по проектам"], N: ["Постпуление ДС"], O: ["нараст итог"], P: ["нараст итог"], Q: ["нараст итог", 2] },
  15: { N: ["Расход ДС"], O: ["нараст итог"], P: ["нараст итог"], Q: ["нараст итог", 2] }
};
const corner = '<svg width="12" height="11" class="ms-auto me-1"><path d="M12 0v11H0z" fill="#dcdadd"/></svg>';
let html = '<colgroup><col style="width:26px">' + columns.map(c => `<col style="width:${widths[c] || 64}px">`).join("") + "</colgroup>";
html += `<thead><tr><th>${corner}</th>` + columns.map(c => `<th${c === "M" ? ' class="picked"' : ""}>${c}</th>`).join("") + "</tr></thead><tbody>";
for (let r = 1; r <= 38; r++) {
  const picked = r >= 6 && r <= 10;
  html += `<tr><th${picked ? ' class="picked"' : ""}>${r}</th>`;
  for (let i = 0; i < columns.length; i++) {
    const c = columns[i], [text, span = 1] = (values[r] || {})[c] || [""];
    const kind = c === "M" && r === 6 ? "anchor" : c === "M" && picked ? "shade" : c === "N" ? "in" : "";
    html += `<td${kind ? ` class="${kind}"` : ""}${span > 1 ? ` colspan="${span}"` : ""}>${text}</td>`;
    i += span - 1;
  }
  html += "</tr>";
}
document.getElementById("sheet").innerHTML = html + "</tbody>";
document.querySelector(".anchor").append(document.getElementById("selection").content.cloneNode(true));
</script>
</body>
</html>
